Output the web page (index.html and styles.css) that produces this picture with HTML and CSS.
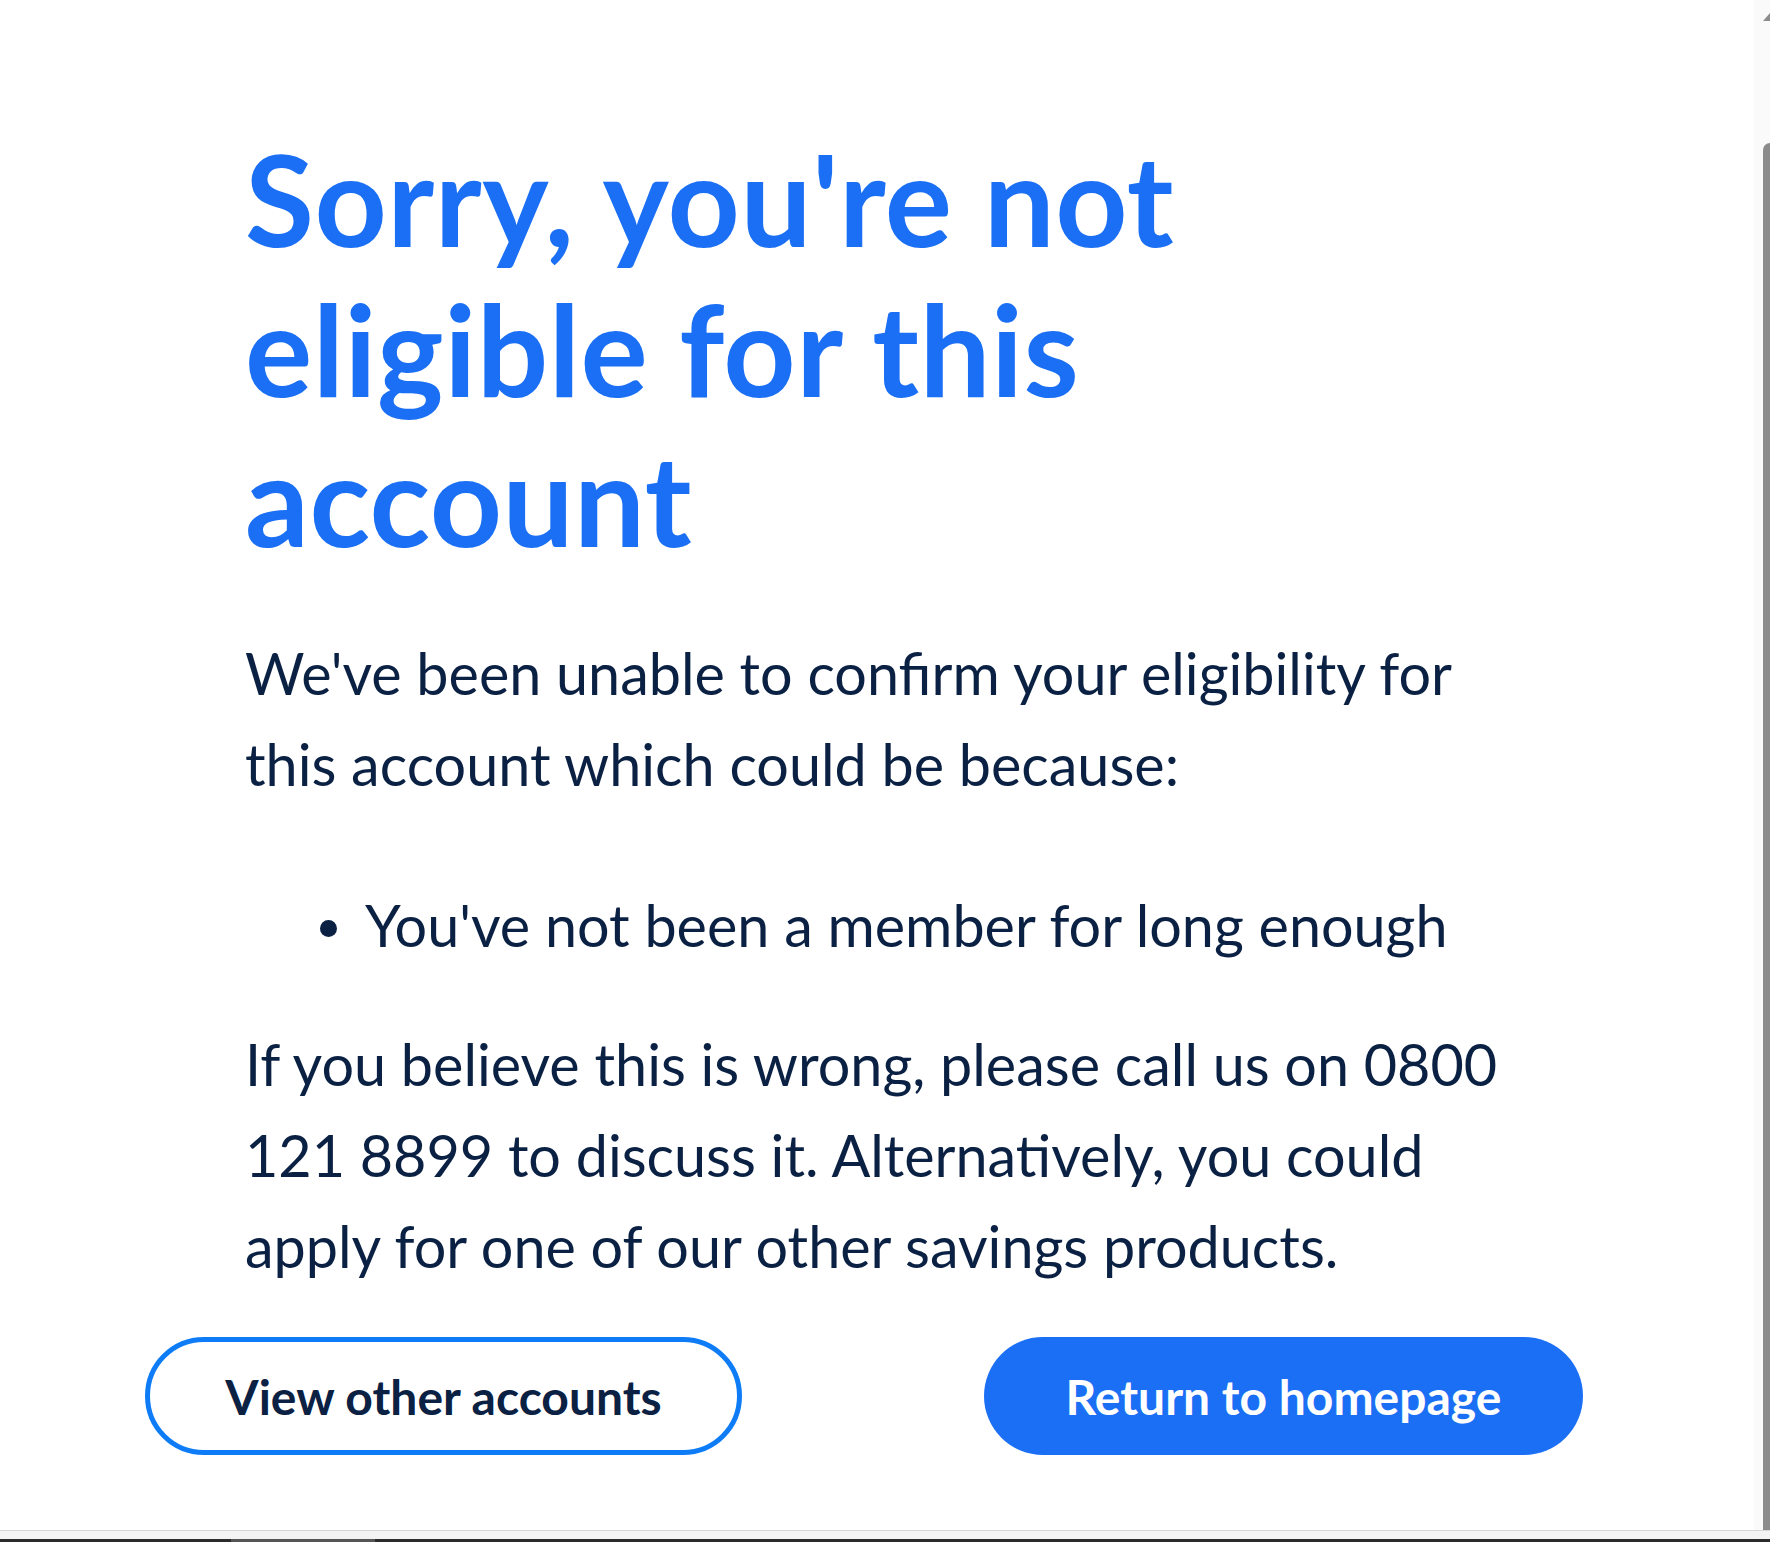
FILE: index.html
```html
<!DOCTYPE html>
<html lang="en">
<head>
<meta charset="utf-8">
<title>Not eligible</title>
<link rel="stylesheet" href="styles.css">
</head>
<body>
<div class="window">
  <div class="main">
    <div class="content">
      <div class="text">
        <h1 class="title">Sorry, you're not eligible for this account</h1>
        <p class="lead">We've been unable to confirm your eligibility for this account which could be because:</p>
        <ul class="reasons">
          <li>You've not been a member for long enough</li>
        </ul>
        <p class="lead">If you believe this is wrong, please call us on 0800 121 8899 to discuss it. Alternatively, you could apply for one of our other savings products.</p>
      </div>
      <div class="actions">
        <a class="btn btn-outline" href="#">View other accounts</a>
        <a class="btn btn-primary" href="#">Return to homepage</a>
      </div>
    </div>
    <div class="scrollbar">
      <span class="arrow"></span>
      <span class="thumb"></span>
    </div>
  </div>
  <div class="statusbar"></div>
  <div class="taskbar"><span class="task"></span></div>
</div>
</body>
</html>
```

FILE: styles.css
```css
html, body {
  margin: 0;
  padding: 0;
  background: #ffffff;
}

body {
  font-family: Lato, "Open Sans", sans-serif;
  color: #0b2143;
  height: 1542px;
  overflow: hidden;
}

.window {
  display: flex;
  flex-direction: column;
  height: 1542px;
}

.main {
  display: flex;
  flex: 1;
  min-height: 0;
}

.content {
  flex: 1;
  padding: 124px 0 0 145px;
}

.text {
  padding-left: 100px;
  width: 1272px;
}

.title {
  margin: 0 0 53px;
  font-size: 126px;
  line-height: 150px;
  font-weight: 700;
  color: #1b6ff5;
  letter-spacing: 0.5px;
}

.lead {
  margin: 0;
  font-size: 57.5px;
  line-height: 91px;
  font-weight: 400;
}

.reasons {
  list-style: none;
  margin: 70px 0 48px;
  padding: 0;
  font-size: 57.5px;
  line-height: 91px;
}

.reasons li {
  position: relative;
  padding-left: 120px;
}

.reasons li::before {
  content: "";
  position: absolute;
  left: 75px;
  top: 41px;
  width: 17px;
  height: 17px;
  border-radius: 50%;
  background: #0b2143;
}

.actions {
  display: flex;
  justify-content: space-between;
  width: 1438px;
  margin-top: 46px;
}

.btn {
  box-sizing: border-box;
  display: flex;
  align-items: center;
  justify-content: center;
  height: 118px;
  border-radius: 59px;
  font-size: 48px;
  font-weight: 700;
  text-decoration: none;
}

.btn-outline {
  width: 597px;
  border: 5px solid #0f7cf7;
  color: #0b2143;
  background: #ffffff;
}

.btn-primary {
  width: 599px;
  background: #1b6ff5;
  color: #ffffff;
}

.scrollbar {
  position: relative;
  width: 16px;
  background: #fafafa;
  display: flex;
  flex-direction: column;
  align-items: flex-end;
}

.arrow {
  margin-top: 13px;
  width: 0;
  height: 0;
  border-left: 7px solid transparent;
  border-bottom: 8px solid #8c8c8c;
}

.thumb {
  margin-top: 122px;
  width: 7px;
  flex: 1;
  background: #8c8c8c;
  border-top-left-radius: 7px;
}

.statusbar {
  height: 8px;
  border-top: 1px solid #d6d6d6;
  background: #f3f3f3;
}

.taskbar {
  height: 3px;
  background: #2b2b2b;
  display: flex;
}

.task {
  margin-left: 231px;
  width: 144px;
  background: #555555;
}
```
